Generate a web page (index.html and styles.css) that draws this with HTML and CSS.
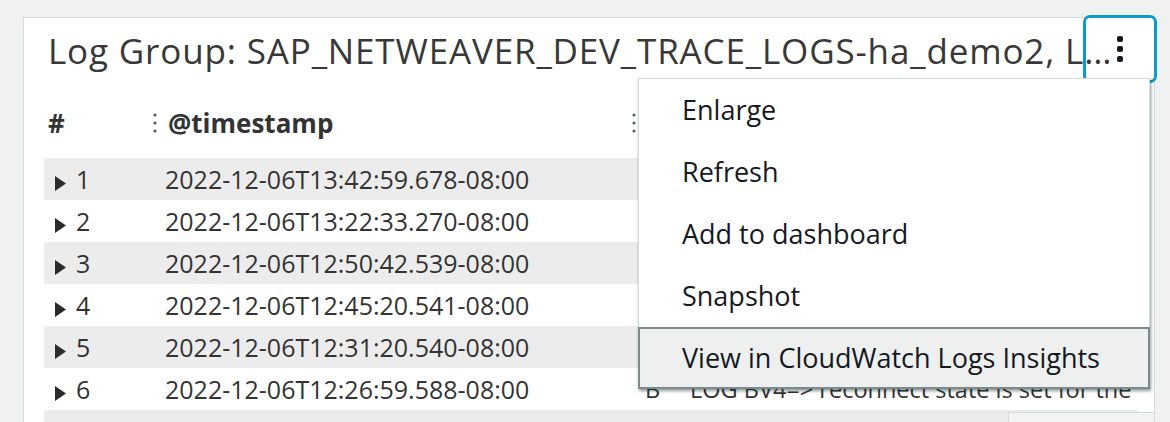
FILE: index.html
```html
<!DOCTYPE html>
<html lang="en">
<head>
<meta charset="utf-8">
<title>Log widget</title>
<link rel="stylesheet" href="styles.css">
</head>
<body>
<div class="page">
  <section class="card">
    <header class="card-header">
      <h2 class="title">Log Group: SAP_NETWEAVER_DEV_TRACE_LOGS-ha_demo2, Log Group: SAP_NETWEAVER_DEV_TRACE_LOGS-ha_demo1</h2>
      <button class="kebab" aria-label="Widget actions"><span class="dot"></span><span class="dot"></span><span class="dot"></span></button>
    </header>

    <div class="table">
      <div class="thead">
        <div class="th th-num">#</div>
        <div class="th"><svg class="resizer" width="4" height="20" viewBox="0 0 4 20"><circle cx="2" cy="2" r="1.6"/><circle cx="2" cy="10" r="1.6"/><circle cx="2" cy="18" r="1.6"/></svg>@timestamp</div>
        <div class="th"><svg class="resizer" width="4" height="20" viewBox="0 0 4 20"><circle cx="2" cy="2" r="1.6"/><circle cx="2" cy="10" r="1.6"/><circle cx="2" cy="18" r="1.6"/></svg>@message</div>
      </div>

      <div class="row odd">
        <div class="td td-num"><svg class="caret" width="11" height="15" viewBox="0 0 11 15"><path d="M0 0 L11 7.5 L0 15 Z"/></svg>1</div>
        <div class="td">2022-12-06T13:42:59.678-08:00</div>
        <div class="td td-msg"><span class="lvl">B</span>LOG BV4=&gt; reconnect state is set for the connection</div>
      </div>
      <div class="row">
        <div class="td td-num"><svg class="caret" width="11" height="15" viewBox="0 0 11 15"><path d="M0 0 L11 7.5 L0 15 Z"/></svg>2</div>
        <div class="td">2022-12-06T13:22:33.270-08:00</div>
        <div class="td td-msg"><span class="lvl">B</span>LOG BV4=&gt; reconnect state is set for the connection</div>
      </div>
      <div class="row odd">
        <div class="td td-num"><svg class="caret" width="11" height="15" viewBox="0 0 11 15"><path d="M0 0 L11 7.5 L0 15 Z"/></svg>3</div>
        <div class="td">2022-12-06T12:50:42.539-08:00</div>
        <div class="td td-msg"><span class="lvl">B</span>LOG BV4=&gt; reconnect state is set for the connection</div>
      </div>
      <div class="row">
        <div class="td td-num"><svg class="caret" width="11" height="15" viewBox="0 0 11 15"><path d="M0 0 L11 7.5 L0 15 Z"/></svg>4</div>
        <div class="td">2022-12-06T12:45:20.541-08:00</div>
        <div class="td td-msg"><span class="lvl">B</span>LOG BV4=&gt; reconnect state is set for the connection</div>
      </div>
      <div class="row odd">
        <div class="td td-num"><svg class="caret" width="11" height="15" viewBox="0 0 11 15"><path d="M0 0 L11 7.5 L0 15 Z"/></svg>5</div>
        <div class="td">2022-12-06T12:31:20.540-08:00</div>
        <div class="td td-msg"><span class="lvl">B</span>LOG BV4=&gt; reconnect state is set for the connection</div>
      </div>
      <div class="row">
        <div class="td td-num"><svg class="caret" width="11" height="15" viewBox="0 0 11 15"><path d="M0 0 L11 7.5 L0 15 Z"/></svg>6</div>
        <div class="td">2022-12-06T12:26:59.588-08:00</div>
        <div class="td td-msg"><span class="lvl">B</span>LOG BV4=&gt; reconnect state is set for the connection</div>
      </div>
      <div class="row odd">
        <div class="td td-num"><svg class="caret" width="11" height="15" viewBox="0 0 11 15"><path d="M0 0 L11 7.5 L0 15 Z"/></svg>7</div>
        <div class="td">2022-12-06T12:20:11.402-08:00</div>
        <div class="td td-msg"><span class="lvl">B</span>LOG BV4=&gt; reconnect state is set for the connection</div>
      </div>
    </div>

    <ul class="menu" role="menu">
      <li class="menu-item">Enlarge</li>
      <li class="menu-item">Refresh</li>
      <li class="menu-item">Add to dashboard</li>
      <li class="menu-item">Snapshot</li>
      <li class="menu-item active">View in CloudWatch Logs Insights</li>
    </ul>

    <div class="tip">Add to dashboard</div>
  </section>
</div>
</body>
</html>
```

FILE: styles.css
```css
html, body {
  margin: 0;
  padding: 0;
}

body {
  background: #f0f1f1;
  font-family: "Open Sans", "Noto Sans", sans-serif;
  color: #333;
  height: 422px;
  overflow: hidden;
}

.page {
  padding: 17px 15px 0 23px;
}

.card {
  position: relative;
  background: #fff;
  border: 1px solid #d5dbdb;
  padding: 0 0 0 20px;
  height: 520px;
  box-sizing: border-box;
}

.card-header {
  display: flex;
  padding: 11px 0 0 4px;
}

.title {
  margin: 0 38px 0 0;
  flex: 1;
  min-width: 0;
  font-size: 35px;
  line-height: 44px;
  letter-spacing: 0.85px;
  font-weight: 400;
  color: #383838;
  white-space: nowrap;
  overflow: hidden;
  text-overflow: ellipsis;
}

.kebab {
  position: absolute;
  top: -3px;
  right: -3px;
  width: 74px;
  height: 68px;
  box-sizing: border-box;
  border: 3px solid #0a9bcb;
  border-radius: 7px;
  background: transparent;
  padding: 0;
  display: flex;
  flex-direction: column;
  align-items: center;
  justify-content: center;
  gap: 4px;
  z-index: 2;
}

.kebab .dot {
  width: 6px;
  height: 6px;
  border-radius: 2px;
  background: #16191f;
}

.table {
  margin-top: 25px;
  margin-right: 16px;
}

.thead,
.row {
  display: grid;
  grid-template-columns: 109px 479px 1fr;
}

.thead {
  height: 50px;
  line-height: 50px;
  font-size: 26px;
  font-weight: 700;
  color: #333;
  margin-bottom: 10px;
}

.th {
  display: flex;
  align-items: center;
  white-space: nowrap;
  overflow: hidden;
}

.th-num {
  padding-left: 4px;
}

.resizer {
  fill: #545b64;
  margin-right: 11px;
  flex: none;
}

.row {
  height: 42px;
  line-height: 42px;
  font-size: 25px;
  color: #333;
}

.row.odd {
  background: #ececec;
}

.td {
  white-space: nowrap;
  overflow: hidden;
  padding-left: 12px;
}

.td-num {
  padding-left: 11px;
}

.caret {
  fill: #2b2b2b;
  vertical-align: -2px;
  margin-right: 10px;
}

.td-msg {
  padding-left: 13px;
  font-size: 23.5px;
}

.lvl {
  display: inline-block;
  width: 45px;
}

.menu {
  position: absolute;
  left: 614px;
  top: 60px;
  width: 512px;
  margin: 0;
  padding: 0;
  list-style: none;
  background: #fff;
  border: 1px solid #d5dbdb;
  box-sizing: border-box;
  box-shadow: 1px 2px 3px rgba(0, 28, 36, 0.45);
  z-index: 3;
}

.menu-item {
  height: 62px;
  line-height: 62px;
  padding-left: 43px;
  font-size: 27px;
  color: #16191f;
  white-space: nowrap;
  box-sizing: border-box;
}

.menu-item.active {
  margin: 0 -1px -1px;
  background: #eef0f0;
  border: 2px solid #7d8a8a;
  line-height: 58px;
  padding-left: 42px;
}

.tip {
  position: absolute;
  left: 984px;
  top: 394px;
  right: 0;
  height: 40px;
  background: #f2f3f3;
  border-top: 1px solid #d5dbdb;
  border-left: 1px solid #d5dbdb;
  font-size: 22px;
  color: #545b64;
  padding: 6px 0 0 40px;
  white-space: nowrap;
  overflow: hidden;
  z-index: 1;
}
```
